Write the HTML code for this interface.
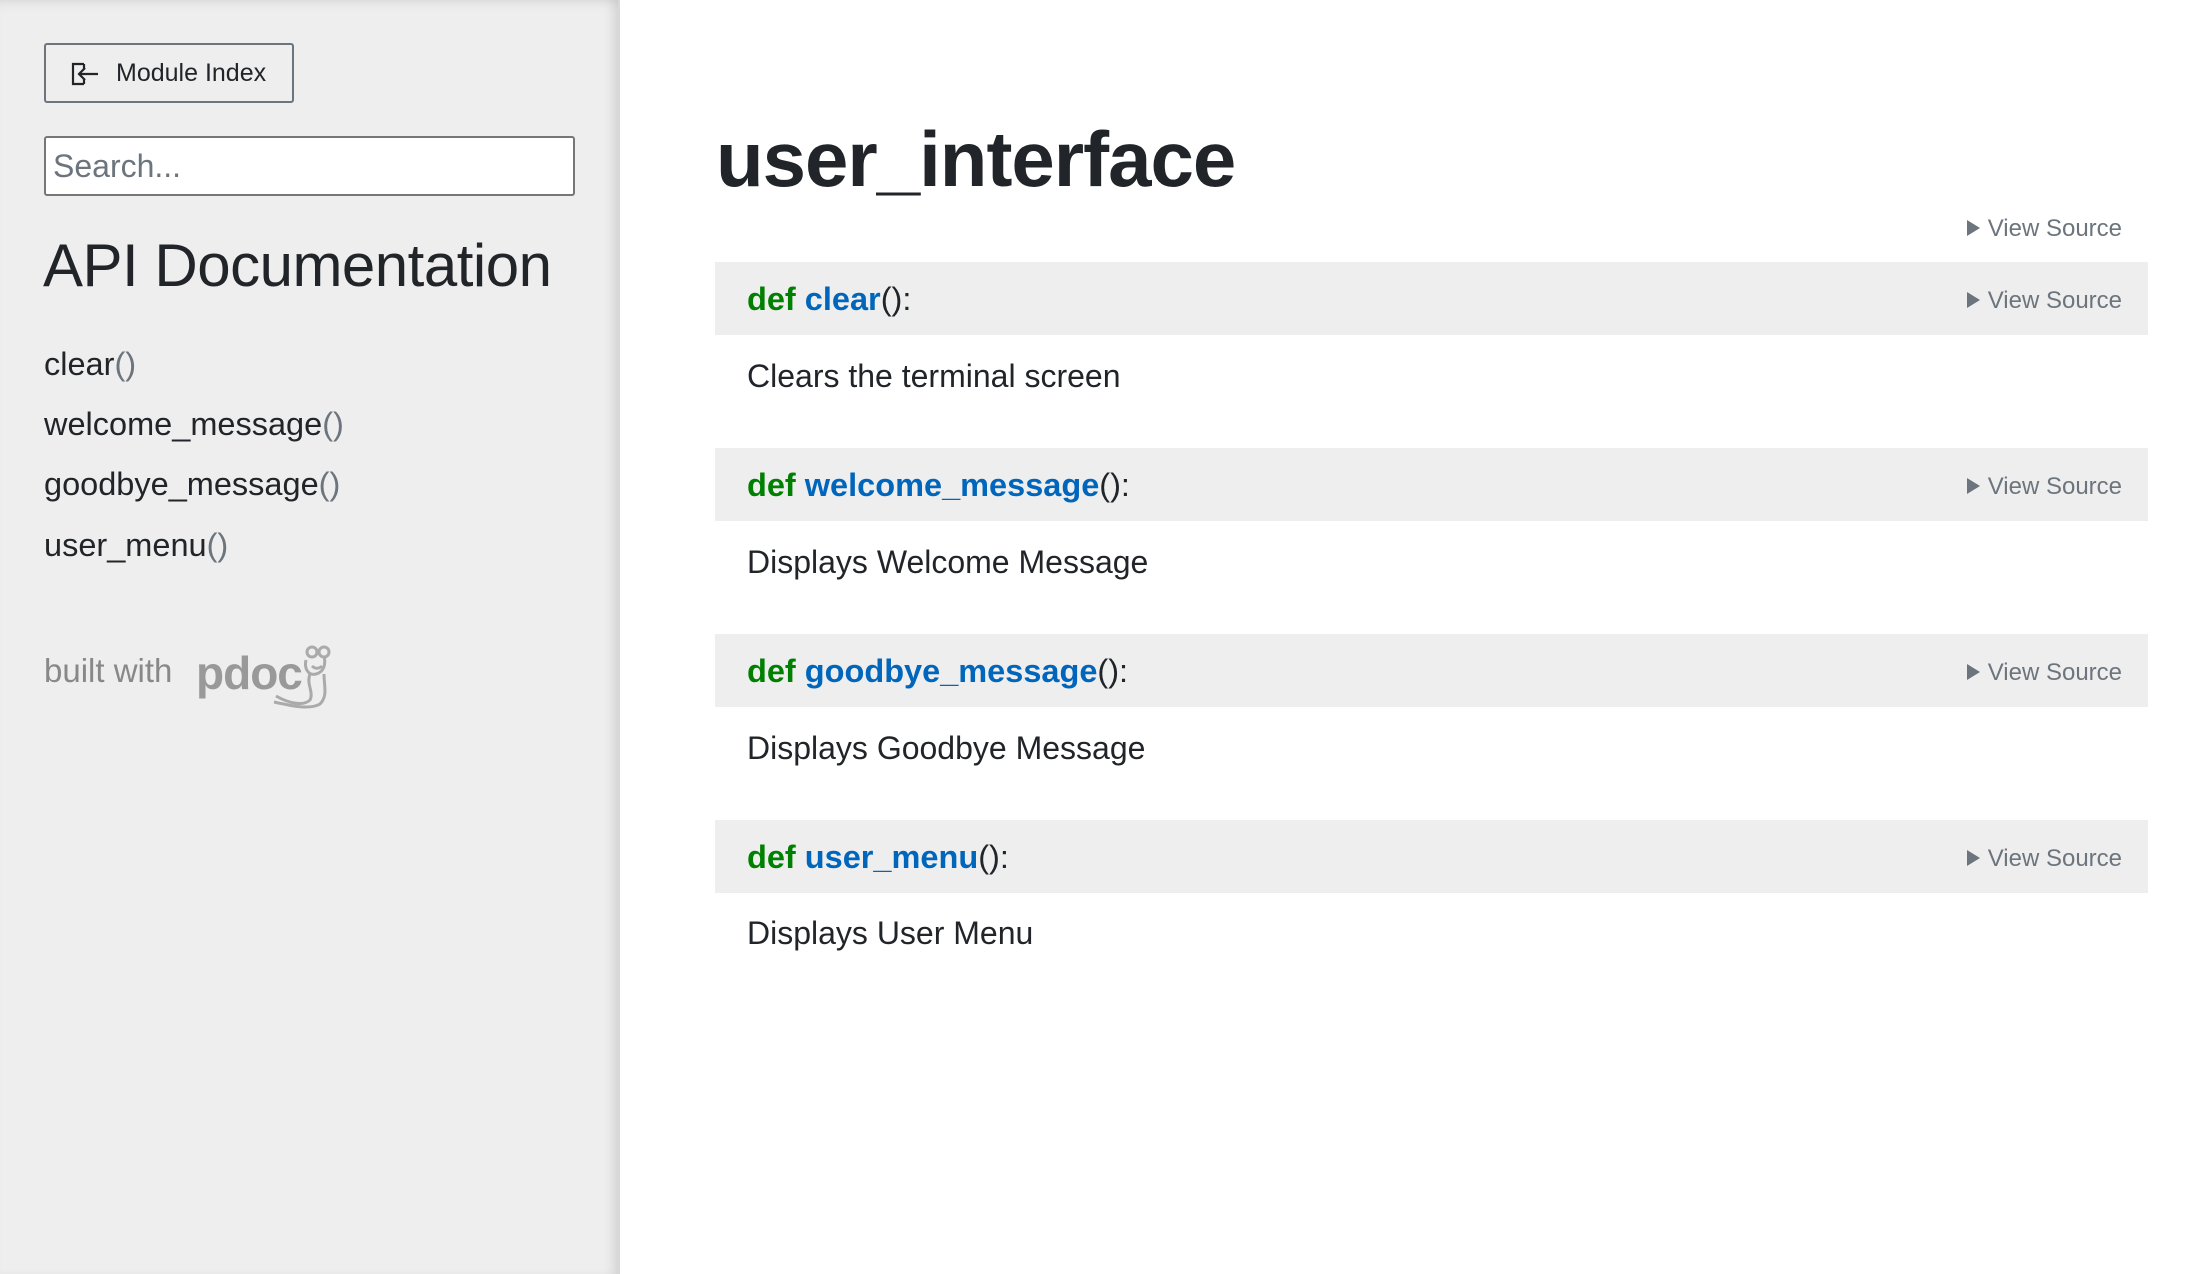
<!DOCTYPE html>
<html><head><meta charset="utf-8"><style>
*{margin:0;padding:0;box-sizing:border-box}
body{width:2212px;height:1274px;overflow:hidden;background:#fff;font-family:"Liberation Sans",sans-serif;color:#212529;position:relative}
.side{position:absolute;left:0;top:0;width:620px;height:1274px;background:#eee;box-shadow:inset -10px 0 12px -6px rgba(0,0,0,.12), inset 0 10px 12px -8px rgba(0,0,0,.08);border-right:2px solid #d8d8d8}
.btn{position:absolute;left:44px;top:43px;width:250px;height:60px;border:2px solid #6c757d;border-radius:3px;font-size:25px;line-height:56px;padding-left:70px;color:#212529}
.btn svg{position:absolute;left:24px;top:15px}
.search{position:absolute;left:44px;top:136px;width:531px;height:60px;border:2px solid #767676;border-radius:3px;background:#fff;font-size:32px;line-height:56px;padding-left:7px;color:#6c757d}
.api{position:absolute;left:43px;top:231px;font-size:60px;color:#212529;white-space:nowrap;letter-spacing:-0.5px}
.nav{position:absolute;left:44px;font-size:32.5px;white-space:nowrap}
.nav span{color:#6c757d}
.built{position:absolute;left:44px;top:652px;font-size:33px;color:#888}
.title{position:absolute;left:716px;top:114px;font-size:78px;font-weight:bold;color:#212529;letter-spacing:-1px}
.vs{position:absolute;right:90px;font-size:24px;color:#6c757d;white-space:nowrap}
.vs:before{content:"";display:inline-block;border-left:13px solid #6c757d;border-top:8px solid transparent;border-bottom:8px solid transparent;margin-right:8px;vertical-align:0px}
.band{position:absolute;left:715px;width:1433px;height:73px;background:#eee}
.sig{position:absolute;left:747px;font-size:32.5px;font-weight:bold;white-space:nowrap}
.sig .d{color:#008000}.sig .n{color:#0066bb}.sig .p{color:#212529;font-weight:normal}
.doc{position:absolute;left:747px;font-size:32px;white-space:nowrap}
</style></head><body>
<div class="side">
<div class="btn"><svg width="30" height="28" viewBox="0 0 30 28" fill="none" stroke="#212529" stroke-width="2.2"><path d="M14 4H3v20h11M14 4v5M14 24v-5"/><path d="M28 14H9M15 8l-6 6 6 6"/></svg>Module Index</div>
<div class="search">Search...</div>
<div class="api">API Documentation</div>
<div class="nav" style="top:346px">clear<span>()</span></div>
<div class="nav" style="top:406px">welcome_message<span>()</span></div>
<div class="nav" style="top:466px">goodbye_message<span>()</span></div>
<div class="nav" style="top:527px">user_menu<span>()</span></div>
<div class="built">built with</div>
<div style="position:absolute;left:196px;top:646px;font-size:46px;font-weight:bold;color:#999;letter-spacing:-1px">pdoc</div>
<svg style="position:absolute;left:262px;top:640px" width="75" height="70" viewBox="0 0 75 70" fill="none" stroke="#aaa" stroke-width="3"><circle cx="50" cy="12" r="5"/><circle cx="62" cy="12" r="5"/><path d="M44 20c-2 8 2 16 10 14 8-2 10-10 8-18"/><path d="M50 26c3 3 7 3 10 0"/><path d="M48 34c-4 10 4 18 0 26-6 6-20 4-34-4"/><path d="M62 34c0 12 4 22-4 30-10 6-28 2-46-2"/></svg>
</div>
<div class="title">user_interface</div>
<div class="vs" style="top:215px">View Source</div>
<div class="band" style="top:262px"></div>
<div class="sig" style="top:281px"><span class="d">def</span> <span class="n">clear</span><span class="p">():</span></div>
<div class="vs" style="top:287px">View Source</div>
<div class="doc" style="top:358px">Clears the terminal screen</div>
<div class="band" style="top:448px"></div>
<div class="sig" style="top:467px"><span class="d">def</span> <span class="n">welcome_message</span><span class="p">():</span></div>
<div class="vs" style="top:473px">View Source</div>
<div class="doc" style="top:544px">Displays Welcome Message</div>
<div class="band" style="top:634px"></div>
<div class="sig" style="top:653px"><span class="d">def</span> <span class="n">goodbye_message</span><span class="p">():</span></div>
<div class="vs" style="top:659px">View Source</div>
<div class="doc" style="top:730px">Displays Goodbye Message</div>
<div class="band" style="top:820px"></div>
<div class="sig" style="top:839px"><span class="d">def</span> <span class="n">user_menu</span><span class="p">():</span></div>
<div class="vs" style="top:845px">View Source</div>
<div class="doc" style="top:915px">Displays User Menu</div>
</body></html>
